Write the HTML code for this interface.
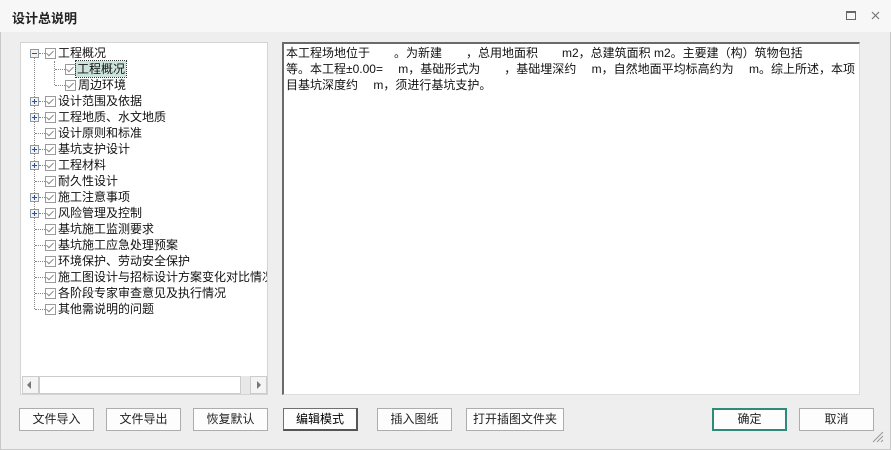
<!DOCTYPE html>
<html><head><meta charset="utf-8"><style>
*{margin:0;padding:0;box-sizing:border-box}
body{width:891px;height:450px;overflow:hidden;background:#eeeeee;font-family:"Liberation Sans","Noto Sans CJK SC",sans-serif;font-size:12px;color:#111;position:relative}
.win{position:absolute;left:0;top:0;width:891px;height:450px;border:1px solid #c8c8c8}
.title{position:absolute;left:0;top:0;width:891px;height:32px;background:#f7f7f7}
.title span{position:absolute;left:12px;top:8px;font-size:13px;font-weight:bold;color:#222}
.tree{position:absolute;left:20px;top:42px;width:248px;height:353px;background:#fff;border:1px solid #d4d4d4;overflow:hidden}
.row{position:absolute;height:16px;line-height:16px;white-space:nowrap}
.cb{position:absolute;width:11px;height:11px;border:1px solid #9a9a9a;background:#fff}
.cb:after{content:"";position:absolute;left:2px;top:0px;width:3px;height:6px;border:solid #8a8a8a;border-width:0 1.5px 1.5px 0;transform:rotate(45deg)}
.ex{position:absolute;width:9px;height:9px;border:1px solid #8a9aa8;background:#f2f2f2}
.ex:before{content:"";position:absolute;left:1px;top:3px;width:5px;height:1px;background:#2a4f9a}
.ex.p:after{content:"";position:absolute;left:3px;top:1px;width:1px;height:5px;background:#2a4f9a}
.vd{position:absolute;border-left:1px dotted #888}
.hd{position:absolute;border-top:1px dotted #888;height:0}
.sb{position:absolute;left:1px;top:333px;width:245px;height:18px;background:#e8e8e8}
.txt{position:absolute;left:282px;top:42px;width:578px;height:353px;background:#fff;border:1px solid #ddd;border-left:2px solid #6a6a6a;border-top:2px solid #6a6a6a;padding:1px 2px;line-height:16px;font-size:12px}
.btn{position:absolute;top:408px;height:23px;border:1px solid #adadad;background:#fdfdfd;text-align:center;line-height:21px;font-size:12px;color:#222}
</style></head><body>
<div class="win"></div>
<div class="title"><span>设计总说明</span>
<div style="position:absolute;left:846px;top:11px;width:10px;height:9px;border:1px solid #666;border-top-width:2px"></div>
<svg style="position:absolute;left:871px;top:11px" width="9" height="9"><path d="M1 1L8 8M8 1L1 8" stroke="#777" stroke-width="1.2"/></svg>
</div>
<div class="tree">
<div class="vd" style="left:13px;top:14px;height:252px"></div>
<div class="vd" style="left:33px;top:18px;height:24px"></div>
<div class="ex" style="left:9px;top:6px"></div>
<div class="hd" style="left:18px;top:10px;width:6px"></div>
<div class="cb" style="left:24px;top:5px"></div><div class="row" style="left:37px;top:2px">工程概况</div>
<div class="hd" style="left:34px;top:26px;width:10px"></div>
<div class="cb" style="left:44px;top:21px"></div><div class="row" style="left:55px;top:18px;background:#cce4dc;outline:1px dotted #333;padding:0 1px">工程概况</div>
<div class="hd" style="left:34px;top:42px;width:10px"></div>
<div class="cb" style="left:44px;top:37px"></div><div class="row" style="left:57px;top:34px">周边环境</div>

<div class="ex p" style="left:9px;top:54px"></div><div class="hd" style="left:18px;top:58px;width:6px"></div>
<div class="cb" style="left:24px;top:53px"></div><div class="row" style="left:37px;top:50px">设计范围及依据</div>
<div class="ex p" style="left:9px;top:70px"></div><div class="hd" style="left:18px;top:74px;width:6px"></div>
<div class="cb" style="left:24px;top:69px"></div><div class="row" style="left:37px;top:66px">工程地质、水文地质</div>
<div class="hd" style="left:14px;top:90px;width:10px"></div>
<div class="cb" style="left:24px;top:85px"></div><div class="row" style="left:37px;top:82px">设计原则和标准</div>
<div class="ex p" style="left:9px;top:102px"></div><div class="hd" style="left:18px;top:106px;width:6px"></div>
<div class="cb" style="left:24px;top:101px"></div><div class="row" style="left:37px;top:98px">基坑支护设计</div>
<div class="ex p" style="left:9px;top:118px"></div><div class="hd" style="left:18px;top:122px;width:6px"></div>
<div class="cb" style="left:24px;top:117px"></div><div class="row" style="left:37px;top:114px">工程材料</div>
<div class="hd" style="left:14px;top:138px;width:10px"></div>
<div class="cb" style="left:24px;top:133px"></div><div class="row" style="left:37px;top:130px">耐久性设计</div>
<div class="ex p" style="left:9px;top:150px"></div><div class="hd" style="left:18px;top:154px;width:6px"></div>
<div class="cb" style="left:24px;top:149px"></div><div class="row" style="left:37px;top:146px">施工注意事项</div>
<div class="ex p" style="left:9px;top:166px"></div><div class="hd" style="left:18px;top:170px;width:6px"></div>
<div class="cb" style="left:24px;top:165px"></div><div class="row" style="left:37px;top:162px">风险管理及控制</div>
<div class="hd" style="left:14px;top:186px;width:10px"></div>
<div class="cb" style="left:24px;top:181px"></div><div class="row" style="left:37px;top:178px">基坑施工监测要求</div>
<div class="hd" style="left:14px;top:202px;width:10px"></div>
<div class="cb" style="left:24px;top:197px"></div><div class="row" style="left:37px;top:194px">基坑施工应急处理预案</div>
<div class="hd" style="left:14px;top:218px;width:10px"></div>
<div class="cb" style="left:24px;top:213px"></div><div class="row" style="left:37px;top:210px">环境保护、劳动安全保护</div>
<div class="hd" style="left:14px;top:234px;width:10px"></div>
<div class="cb" style="left:24px;top:229px"></div><div class="row" style="left:37px;top:226px">施工图设计与招标设计方案变化对比情况</div>
<div class="hd" style="left:14px;top:250px;width:10px"></div>
<div class="cb" style="left:24px;top:245px"></div><div class="row" style="left:37px;top:242px">各阶段专家审查意见及执行情况</div>
<div class="hd" style="left:14px;top:266px;width:10px"></div>
<div class="cb" style="left:24px;top:261px"></div><div class="row" style="left:37px;top:258px">其他需说明的问题</div>
<div style="position:absolute;left:246px;top:0;width:2px;height:353px;background:#eee"></div>
<div class="sb">
<div style="position:absolute;left:0;top:0;width:17px;height:18px;border:1px solid #ccc;background:#f4f4f4"></div>
<div style="position:absolute;left:5px;top:5px;border:4px solid transparent;border-right:4px solid #777;border-left:0"></div>
<div style="position:absolute;left:17px;top:0;width:202px;height:18px;border:1px solid #ccc;background:#fff"></div>
<div style="position:absolute;left:228px;top:0;width:17px;height:18px;border:1px solid #ccc;background:#f4f4f4"></div>
<div style="position:absolute;left:235px;top:5px;border:4px solid transparent;border-left:4px solid #777;border-right:0"></div>
</div>
</div>
<div class="txt">本工程场地位于　　。为新建　　，总用地面积　　m2，总建筑面积 m2。主要建（构）筑物包括<br>等。本工程±0.00=　 m，基础形式为　　，基础埋深约　 m，自然地面平均标高约为　 m。综上所述，本项<br>目基坑深度约　 m，须进行基坑支护。</div>
<div class="btn" style="left:19px;width:75px">文件导入</div>
<div class="btn" style="left:106px;width:75px">文件导出</div>
<div class="btn" style="left:193px;width:75px">恢复默认</div>
<div class="btn" style="left:283px;width:75px;border-color:#707070;border-bottom:2px solid #555;border-right:2px solid #555;color:#000">编辑模式</div>
<div class="btn" style="left:377px;width:75px">插入图纸</div>
<div class="btn" style="left:466px;width:98px">打开插图文件夹</div>
<div class="btn" style="left:712px;width:75px;border:2px solid #2e8b7a;line-height:19px">确定</div>
<div class="btn" style="left:799px;width:75px">取消</div>
<svg style="position:absolute;left:872px;top:431px" width="12" height="12"><path d="M11 1L1 11M11 5L5 11M11 9L9 11" stroke="#999" stroke-width="1"/></svg>
</body></html>
